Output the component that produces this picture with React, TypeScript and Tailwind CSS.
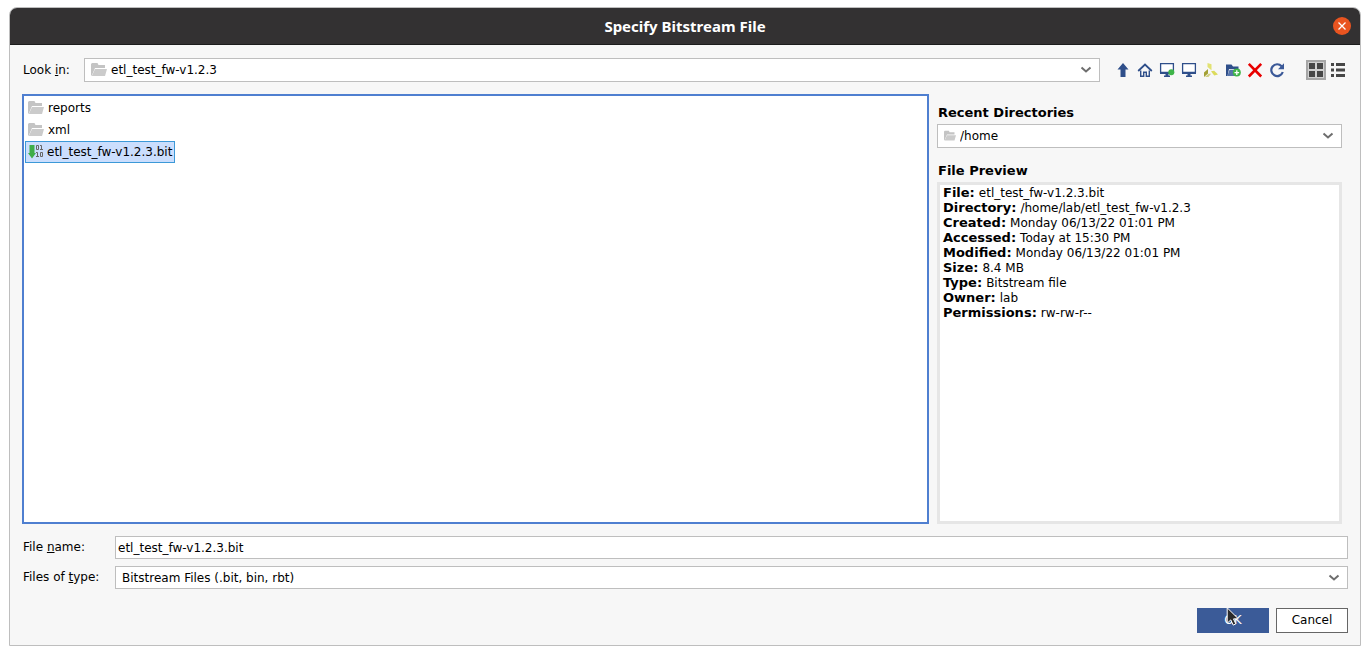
import { ReactNode, useState } from 'react';
import clsx from 'clsx';

const FILES = [
  { name: 'reports', kind: 'folder' },
  { name: 'xml', kind: 'folder' },
  { name: 'etl_test_fw-v1.2.3.bit', kind: 'bit' },
];

const PREVIEW = [
  ['File', 'etl_test_fw-v1.2.3.bit'],
  ['Directory', '/home/lab/etl_test_fw-v1.2.3'],
  ['Created', 'Monday 06/13/22 01:01 PM'],
  ['Accessed', 'Today at 15:30 PM'],
  ['Modified', 'Monday 06/13/22 01:01 PM'],
  ['Size', '8.4 MB'],
  ['Type', 'Bitstream file'],
  ['Owner', 'lab'],
  ['Permissions', 'rw-rw-r--'],
];

function Icon({ children, size = 16 }: { children: ReactNode; size?: number }) {
  return (
    <svg width={size} height={size} viewBox="0 0 16 16" fill="none" className="shrink-0" aria-hidden="true">
      {children}
    </svg>
  );
}

function FolderIcon({ size = 16 }: { size?: number }) {
  return (
    <Icon size={size}>
      <path d="M0 14V2l1-1h5.5l1 2H14v3H4L1 13z" fill="#c4c4c4" />
      <path d="M4 7h12l-2 7H.8z" fill="#cbcbcb" />
    </Icon>
  );
}

function BitFileIcon() {
  return (
    <Icon>
      <path d="M1.5 1h5v8H8l-4 5.5L0 9h1.5z" fill="#3fae49" />
      <path
        d="M8.5 1.5h2v4h-2zM12 1.5h1.5v4M12 5.5h3M8 8.5h1.5v4M8 12.5h3M12.5 8.5h2v4h-2z"
        stroke="#666"
        strokeWidth="1"
      />
    </Icon>
  );
}

function Chevron() {
  return (
    <svg width="12" height="8" viewBox="0 0 12 8" fill="none" className="pointer-events-none shrink-0" aria-hidden="true">
      <path d="M1.5 1.5 6 5.5l4.5-4" stroke="#6e6e6e" strokeWidth="2" />
    </svg>
  );
}

function Monitor() {
  return (
    <>
      <path d="M1.6 1.6h12.8v9H1.6z" fill="#fff" stroke="#2f4f8a" strokeWidth="1.3" />
      <path d="M1 9.8h14V12H1zM6.5 12h3v1.5H11V15H5v-1.5h1.5z" fill="#2f4f8a" />
    </>
  );
}

const TOOLS: { label: string; icon: ReactNode }[] = [
  { label: 'Up one level', icon: <path d="M8 1l5.5 6.5h-3V15h-5V7.5h-3z" fill="#2f4f8a" /> },
  {
    label: 'Home',
    icon: (
      <>
        <path d="M1.2 9 8 2.6 14.8 9" stroke="#2f4f8a" strokeWidth="1.8" />
        <path d="M3.7 8.5v5.7h3v-4h2.6v4h3V8.5" stroke="#2f4f8a" strokeWidth="1.4" />
      </>
    ),
  },
  {
    label: 'Project directory',
    icon: (
      <>
        <Monitor />
        <circle cx="12.3" cy="10.2" r="3" fill="#3fb549" />
      </>
    ),
  },
  { label: 'Desktop', icon: <Monitor /> },
  {
    label: 'Install directory',
    icon: (
      <>
        <path d="M4.5 1l4 1.2v6L4.5 5z" fill="#e2e272" />
        <path d="M5 7v4.5L1 15v-4.5z" fill="#a3a035" />
        <path d="M2 15l3.6-3.2H8L5.5 15z" fill="#d2d182" />
        <path d="M8 9.2l3.2-.4 3.8 3.6-3.8 1.1z" fill="#dcdb5c" />
      </>
    ),
  },
  {
    label: 'New folder',
    icon: (
      <>
        <path d="M1 14V2.5h5.5L8 4.5h5.5V7H4L2.5 14z" fill="#2f4f8a" />
        <path d="M4.5 7.8H15L12.5 14H2.3z" fill="#5674aa" />
        <circle cx="11.8" cy="10.6" r="4" fill="#3fb549" />
        <path d="M11.8 8.3v4.6M9.5 10.6h4.6" stroke="#fff" strokeWidth="1.3" />
      </>
    ),
  },
  { label: 'Delete', icon: <path d="M1.8 1.8l12.4 12.7M14.2 1.8 1.8 14.5" stroke="#e80000" strokeWidth="2.6" /> },
  {
    label: 'Refresh',
    icon: (
      <>
        <path d="M12.6 4.2A5.9 5.9 0 1 0 13.8 10" stroke="#3b5998" strokeWidth="2.2" />
        <path d="M15 1.2v6H9z" fill="#3b5998" />
      </>
    ),
  },
];

function Toolbar() {
  return (
    <div className="flex items-center">
      {TOOLS.map(({ label, icon }) => (
        <button key={label} type="button" aria-label={label} className="flex size-[22px] items-center justify-center">
          <Icon>{icon}</Icon>
        </button>
      ))}
      <button
        type="button"
        aria-label="List view"
        aria-pressed="true"
        className="ml-[18px] flex size-5 items-center justify-center border-2 border-[#a6a6a6] bg-[#d0d0d0]"
      >
        <Icon>
          <path d="M1 1h6v6H1zM9 1h6v6H9zM1 9h6v6H1zM9 9h6v6H9z" fill="#474747" />
        </Icon>
      </button>
      <button type="button" aria-label="Details view" className="ml-px flex size-[22px] items-center justify-center">
        <Icon>
          <path d="M1 1h3v3H1zM6 1h9v3H6zM1 6.5h3v3H1zM6 6.5h9v3H6zM1 12h3v3H1zM6 12h9v3H6z" fill="#474747" />
        </Icon>
      </button>
    </div>
  );
}

function ComboBox({ id, icon, options }: { id: string; icon?: ReactNode; options: string[] }) {
  return (
    <div className="flex min-w-0 flex-1 items-center gap-1 border border-[#bebebe] bg-white pr-[7px] pl-1.5">
      {icon}
      <select id={id} className="h-[21px] min-w-0 flex-1 appearance-none bg-transparent pt-px outline-none">
        {options.map((o) => (
          <option key={o}>{o}</option>
        ))}
      </select>
      <Chevron />
    </div>
  );
}

function Pointer() {
  return (
    <svg width="14" height="20" viewBox="0 0 14 20" className="absolute -top-px left-[29px]" aria-hidden="true">
      <path d="M1.2.8v15.4l3.6-3.3 2.4 5.2 2.6-1.2-2.3-5 4.7-.2z" fill="#2b2b2b" stroke="#fff" strokeWidth="1" />
    </svg>
  );
}

export default function App() {
  const [selected, setSelected] = useState('etl_test_fw-v1.2.3.bit');

  return (
    <div className="flex min-h-screen flex-col bg-white px-[9px] pt-[7px] pb-[9px] font-['DejaVu_Sans',sans-serif] text-[12px] leading-[15px] text-black">
      <div role="dialog" aria-labelledby="title" className="flex flex-1 flex-col overflow-hidden rounded-t-lg border border-[#bebebe] bg-[#f7f7f7]">
        <header className="grid h-[37px] grid-cols-[1fr_auto_1fr] items-center border-b border-[#1c1c1c] bg-[#333132] px-[9px]">
          <h1 id="title" className="col-start-2 font-['Noto_Sans','Open_Sans',sans-serif] text-[15px] font-bold text-white">
            Specify Bitstream File
          </h1>
          <button type="button" aria-label="Close" className="flex size-[18px] items-center justify-center justify-self-end rounded-full bg-[#e95420]">
            <svg width="8" height="8" viewBox="0 0 8 8" aria-hidden="true">
              <path d="M.5.5l7 7M7.5.5l-7 7" stroke="#fff" strokeWidth="1.3" />
            </svg>
          </button>
        </header>

        <form className="flex flex-1 flex-col px-3 pt-[13px] pb-3" onSubmit={(e) => e.preventDefault()}>
          <div className="flex items-center">
            <label htmlFor="look-in" className="w-[62px] pl-px">
              Look <u>i</u>n:
            </label>
            <div className="flex h-6 flex-1">
              <ComboBox id="look-in" icon={<FolderIcon />} options={['etl_test_fw-v1.2.3']} />
            </div>
            <div className="-mr-px ml-3">
              <Toolbar />
            </div>
          </div>

          <div className="mt-3 flex flex-1 gap-2">
            <ul role="listbox" aria-label="Files" className="flex-1 border-2 border-[#4f7fd0] bg-white p-px">
              {FILES.map(({ name, kind }) => (
                <li key={name} role="option" aria-selected={selected === name}>
                  <button
                    type="button"
                    onClick={() => setSelected(name)}
                    className={clsx(
                      'flex h-[22px] items-center border px-0.5',
                      kind === 'folder' ? 'gap-1' : 'gap-[3px]',
                      selected === name ? 'border-[#3c99d8] bg-[#cbdefd]' : 'border-transparent',
                    )}
                  >
                    {kind === 'folder' ? <FolderIcon /> : <BitFileIcon />}
                    <span className="pt-px">{name}</span>
                  </button>
                </li>
              ))}
            </ul>

            <aside className="mr-1.5 flex w-[405px] flex-col">
              <label htmlFor="recent" className="mt-[11px] pl-px text-[13px] font-bold">
                Recent Directories
              </label>
              <div className="mt-1 flex h-6">
                <ComboBox id="recent" icon={<FolderIcon size={12} />} options={['/home']} />
              </div>
              <h2 className="mt-[15px] pl-px text-[13px] font-bold">File Preview</h2>
              <dl className="mt-1 flex-1 border-[3px] border-[#e6e6e6] bg-white px-[3px]">
                {PREVIEW.map(([key, value]) => (
                  <div key={key} className="flex h-[15px] items-baseline gap-1">
                    <dt className="text-[13px] font-bold">{key}:</dt>
                    <dd>{value}</dd>
                  </div>
                ))}
              </dl>
            </aside>
          </div>

          <div className="mt-3 flex items-center">
            <label htmlFor="file-name" className="w-[93px] pl-px">
              File <u>n</u>ame:
            </label>
            <input
              id="file-name"
              type="text"
              defaultValue="etl_test_fw-v1.2.3.bit"
              className="h-[23px] min-w-0 flex-1 border border-[#bebebe] bg-white px-0.5 outline-none"
            />
          </div>
          <div className="mt-[7px] flex items-center">
            <label htmlFor="file-type" className="w-[93px] pl-px">
              Files of <u>t</u>ype:
            </label>
            <ComboBox id="file-type" options={['Bitstream Files (.bit, bin, rbt)']} />
          </div>

          <div className="mt-[19px] flex justify-end gap-[7px]">
            <button type="submit" className="relative h-[25px] w-[72px] bg-[#3b5b98] text-white">
              OK
              <Pointer />
            </button>
            <button type="button" className="h-[25px] w-[72px] border border-[#666] bg-white">
              Cancel
            </button>
          </div>
        </form>
      </div>
    </div>
  );
}
